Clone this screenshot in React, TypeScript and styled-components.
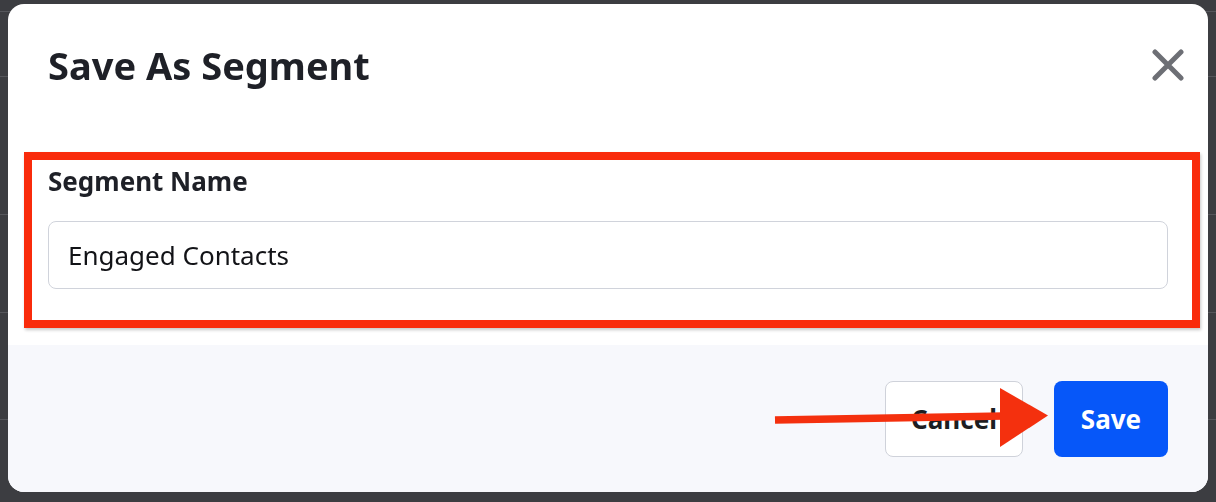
import React from "react";
import styled, { createGlobalStyle } from "styled-components";

const GlobalStyle = createGlobalStyle`
  html, body { margin: 0; padding: 0; }
  body {
    background: #3c3d41;
    font-family: "Noto Sans", "Open Sans", sans-serif;
    -webkit-font-smoothing: antialiased;
  }
  * { box-sizing: border-box; }
`;

const Backdrop = styled.div`
  width: 1216px;
  height: 502px;
  display: flex;
  flex-direction: column;
  background: #3c3d41;
  overflow: hidden;
`;

const BackdropRow = styled.div<{ $h: number }>`
  flex: 0 0 ${(p) => p.$h}px;
  border-bottom: 1px solid #55565b;
`;

const Overlay = styled.div`
  position: fixed;
  inset: 0;
  padding: 4px 8px 10px 8px;
  display: flex;
  align-items: flex-start;
  justify-content: center;
`;

const Modal = styled.div`
  width: 1200px;
  height: 488px;
  background: #ffffff;
  border-radius: 16px;
  overflow: hidden;
  display: flex;
  flex-direction: column;
`;

const Header = styled.header`
  display: flex;
  align-items: center;
  justify-content: space-between;
  padding: 39px 24px 0 40px;
`;

const Title = styled.h2`
  margin: 0;
  font-size: 38px;
  line-height: 44px;
  font-weight: 700;
  color: #1e2027;
`;

const CloseButton = styled.button`
  width: 32px;
  height: 32px;
  padding: 0;
  border: none;
  background: transparent;
  display: flex;
  align-items: center;
  justify-content: center;
  cursor: pointer;
`;

const Highlight = styled.section`
  margin: 65px 8px 0 16px;
  border: 8px solid #f92b0b;
  box-shadow: 1px 2px 3px rgba(0, 0, 0, 0.22);
  padding: 5px 24px 31px 16px;
  display: flex;
  flex-direction: column;
  gap: 24px;
`;

const Label = styled.label`
  font-size: 26px;
  line-height: 32px;
  font-weight: 700;
  color: #1e2027;
`;

const TextInput = styled.input`
  height: 68px;
  width: 100%;
  border: 1.5px solid #d0d3db;
  border-radius: 8px;
  padding: 0 19px;
  font-family: inherit;
  font-size: 26px;
  color: #121317;
  background: #fff;
  outline: none;
`;

const Footer = styled.footer`
  position: relative;
  flex: 1;
  margin-top: 17px;
  background: #f7f8fc;
  display: flex;
  justify-content: flex-end;
  align-items: flex-start;
  gap: 31px;
  padding: 36px 40px 0 40px;
`;

const Button = styled.button<{ $primary?: boolean; $w: number }>`
  width: ${(p) => p.$w}px;
  height: 76px;
  border-radius: 8px;
  font-family: inherit;
  font-size: 26px;
  font-weight: 700;
  cursor: pointer;
  border: ${(p) => (p.$primary ? "none" : "1.5px solid #cfd2da")};
  background: ${(p) => (p.$primary ? "#0657f9" : "#ffffff")};
  color: ${(p) => (p.$primary ? "#ffffff" : "#1c1e23")};
`;

const ArrowLayer = styled.svg`
  position: absolute;
  left: 0;
  top: 0;
  width: 100%;
  height: 100%;
  pointer-events: none;
`;

export default function App() {
  return (
    <>
      <GlobalStyle />
      <Backdrop>
        <BackdropRow $h={12} />
        <BackdropRow $h={65} />
        <BackdropRow $h={138} />
        <BackdropRow $h={98} />
        <BackdropRow $h={107} />
      </Backdrop>
      <Overlay>
        <Modal role="dialog" aria-label="Save As Segment">
          <Header>
            <Title>Save As Segment</Title>
            <CloseButton aria-label="Close">
              <svg width="32" height="32" viewBox="0 0 32 32">
                <path
                  d="M3 3 L29 29 M29 3 L3 29"
                  stroke="#6d6f75"
                  strokeWidth="5"
                  strokeLinecap="round"
                  fill="none"
                />
              </svg>
            </CloseButton>
          </Header>
          <Highlight>
            <Label htmlFor="segment-name">Segment Name</Label>
            <TextInput id="segment-name" defaultValue="Engaged Contacts" />
          </Highlight>
          <Footer>
            <Button $w={138}>Cancel</Button>
            <Button $primary $w={114}>Save</Button>
            <ArrowLayer viewBox="0 0 1200 147">
              <line x1="767" y1="75" x2="996" y2="71" stroke="#f4300e" strokeWidth="7.5" />
              <polygon points="992,43 1040,70.5 992,102" fill="#f4300e" />
            </ArrowLayer>
          </Footer>
        </Modal>
      </Overlay>
    </>
  );
}
